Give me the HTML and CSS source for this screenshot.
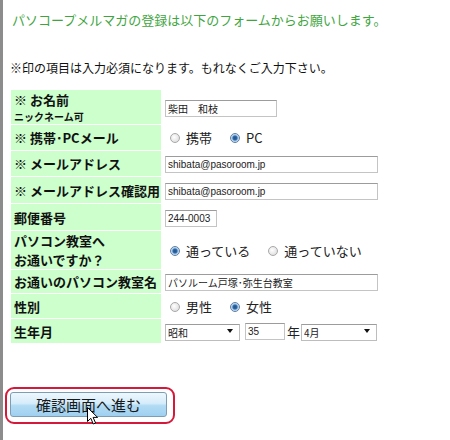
FILE: index.html
```html
<!DOCTYPE html>
<html lang="ja">
<head>
    <meta charset="UTF-8">
    <title>メルマガ登録</title>
    <link rel="stylesheet" href="styles.css">
</head>
<body>
    <div class="page">
        <p class="lead">パソコープメルマガの登録は以下のフォームからお願いします。</p>
        <p class="note">※印の項目は入力必須になります。もれなくご入力下さい。</p>
        <form>
            <table class="entry">
                <tr class="r-name">
                    <th>※ お名前<span class="sub">ニックネーム可</span></th>
                    <td><input type="text" class="in-name" value="柴田　和枝"></td>
                </tr>
                <tr class="r-mail-type">
                    <th>※ 携帯･PCメール</th>
                    <td>
                        <label class="opt"><input type="radio" name="mtype">携帯</label>
                        <label class="opt"><input type="radio" name="mtype" checked>PC</label>
                    </td>
                </tr>
                <tr class="r-mail">
                    <th>※ メールアドレス</th>
                    <td><input type="text" class="in-wide" value="shibata@pasoroom.jp"></td>
                </tr>
                <tr class="r-mail2">
                    <th>※ メールアドレス確認用</th>
                    <td><input type="text" class="in-wide" value="shibata@pasoroom.jp"></td>
                </tr>
                <tr class="r-zip">
                    <th>郵便番号</th>
                    <td><input type="text" class="in-zip" value="244-0003"></td>
                </tr>
                <tr class="r-school">
                    <th>パソコン教室へ<br>お通いですか？</th>
                    <td>
                        <label class="opt"><input type="radio" name="school" checked>通っている</label>
                        <label class="opt"><input type="radio" name="school">通っていない</label>
                    </td>
                </tr>
                <tr class="r-school-name">
                    <th>お通いのパソコン教室名</th>
                    <td><input type="text" class="in-wide" value="パソルーム戸塚･弥生台教室"></td>
                </tr>
                <tr class="r-sex">
                    <th>性別</th>
                    <td>
                        <label class="opt"><input type="radio" name="sex">男性</label>
                        <label class="opt"><input type="radio" name="sex" checked>女性</label>
                    </td>
                </tr>
                <tr class="r-birth">
                    <th>生年月</th>
                    <td>
                        <div class="birth">
                            <span class="sel sel-era"><select><option>昭和</option></select></span>
                            <input type="text" class="in-year" value="35">
                            <span class="unit">年</span>
                            <span class="sel sel-month"><select><option>4月</option></select></span>
                        </div>
                    </td>
                </tr>
            </table>
            <div class="submit-ring">
                <button type="button" class="submit">確認画面へ進む</button>
                <svg class="pointer" width="12" height="18" viewBox="0 0 12 18">
                    <path d="M0.5 0.5 L0.5 14.5 L3.8 11.3 L6.3 17 L8.6 16 L6.1 10.4 L10.6 10.4 Z" fill="#fff" stroke="#000" stroke-width="1"/>
                </svg>
            </div>
        </form>
    </div>
</body>
</html>
```

FILE: styles.css
```css
body {
    margin: 0;
    padding: 0;
    background-color: #fff;
    font-family: "Noto Sans CJK JP", "Liberation Sans", sans-serif;
}
.page {
    min-height: 440px;
    border-left: 3px solid #8c8c8c;
    box-sizing: border-box;
}
.lead {
    margin: 0;
    padding: 11px 0 0 9px;
    font-size: 13px;
    line-height: 18px;
    color: #3fa63f;
}
.note {
    margin: 30px 0 0 7px;
    font-size: 12px;
    line-height: 18px;
    color: #111;
}
.entry {
    margin: 12px 0 0 8px;
    border-collapse: separate;
    border-spacing: 0 1px;
}
.entry th {
    width: 147px;
    padding: 0 0 0 3px;
    background-color: #ccffcc;
    text-align: left;
    font-size: 13px;
    line-height: 19px;
    font-weight: bold;
    color: #111;
}
.entry th .sub {
    display: block;
    font-size: 10px;
    line-height: 15px;
}
.entry td {
    padding: 0 0 0 4px;
    font-size: 13px;
}
.r-name { height: 34px; }
.r-mail-type { height: 25px; }
.r-mail { height: 25px; }
.r-mail2 { height: 26px; }
.r-zip { height: 26px; }
.r-school { height: 38px; }
.r-school-name { height: 23px; }
.r-sex { height: 24px; }
.r-birth { height: 24px; }

.entry input[type="text"] {
    height: 17px;
    margin: 0;
    padding: 0 2px;
    border: 1px solid #c4c4c4;
    border-top-color: #9c9c9c;
    box-sizing: border-box;
    font-family: "Liberation Sans", "Noto Sans CJK JP", sans-serif;
    font-size: 10px;
    color: #222;
    vertical-align: middle;
}
.in-name { width: 112px; }
.in-wide { width: 213px; }
.in-zip { width: 52px; }
.in-year { width: 40px; }

.opt {
    display: inline-flex;
    align-items: center;
    margin: 0 10px 0 5px;
    color: #222;
    font-size: 13px;
    line-height: 16px;
}
.opt input {
    appearance: none;
    -webkit-appearance: none;
    width: 10px;
    height: 10px;
    margin: 0 6px 0 0;
    border: 1px solid #a8a8a8;
    border-radius: 50%;
    background: radial-gradient(circle at 40% 40%, #fff 0, #e2e2e2 70%);
}
.opt input:checked {
    border-color: #5d7fa3;
    background: radial-gradient(circle, #1d4f86 0, #2f6aa8 2px, #9fc2e6 3px, #eef4fa 4.5px);
}

.birth {
    display: flex;
    align-items: center;
}
.sel {
    position: relative;
    display: inline-block;
}
.sel select {
    appearance: none;
    -webkit-appearance: none;
    height: 17px;
    margin: 0;
    padding: 0 2px;
    border: 1px solid #bdbdbd;
    border-top-color: #9c9c9c;
    border-radius: 0;
    background-color: #fff;
    font-family: "Noto Sans CJK JP", sans-serif;
    font-size: 10px;
    color: #222;
}
.sel::after {
    content: "";
    position: absolute;
    right: 7px;
    top: 7px;
    border-top: 4px solid #111;
    border-left: 3px solid transparent;
    border-right: 3px solid transparent;
}
.sel-era select { width: 75px; }
.sel-month select { width: 76px; }
.in-year { margin-left: 5px !important; }
.unit {
    margin: 0 1px 0 2px;
    font-size: 13px;
    color: #222;
}

.submit-ring {
    position: relative;
    display: inline-block;
    margin: 43px 0 0 2px;
    padding: 3px 6px 5px 3px;
    border: 2px solid #d5193a;
    border-radius: 9px;
}
.submit {
    display: block;
    width: 157px;
    height: 25px;
    padding: 0;
    border: 1px solid #7d9db5;
    border-radius: 3px;
    background: linear-gradient(#eef7fd 0%, #d6ecfa 45%, #b2dbf4 55%, #9fd0f0 100%);
    font-family: "Noto Sans CJK JP", sans-serif;
    font-size: 15px;
    line-height: 22px;
    color: #1a1a1a;
}
.pointer {
    position: absolute;
    left: 80px;
    top: 18px;
}
```
